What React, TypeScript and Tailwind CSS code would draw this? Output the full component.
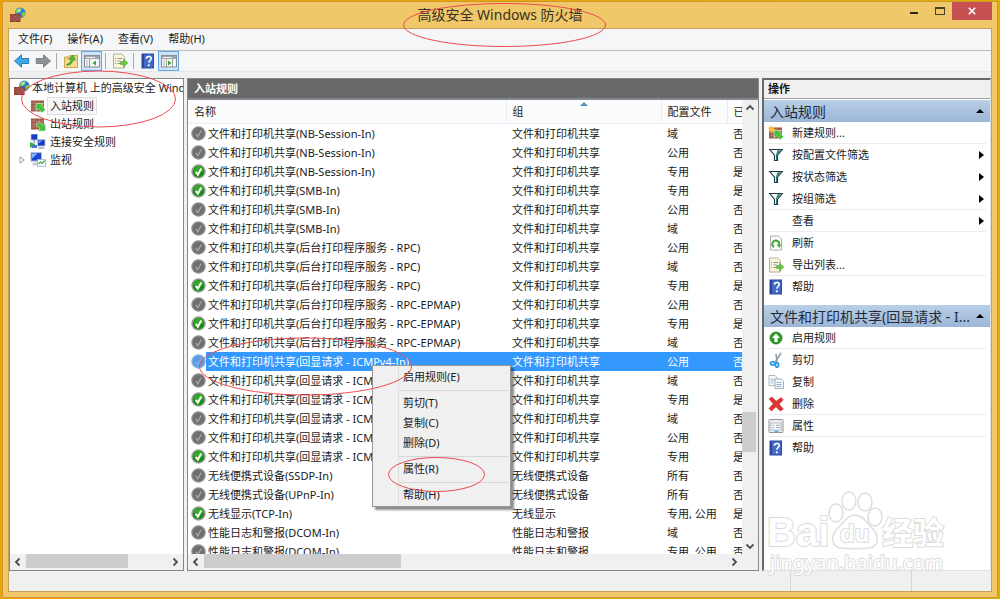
import type { ReactNode } from 'react';
import clsx from 'clsx';

const SHARE = '文件和打印机共享';
const PORTABLE = '无线便携式设备';
const PERF = '性能日志和警报';

interface Rule {
  name: string;
  group: string;
  profile: string;
  enabled: boolean;
  selected?: boolean;
}

const rules: Rule[] = [
  { name: `${SHARE}(NB-Session-In)`, group: SHARE, profile: '域', enabled: false },
  { name: `${SHARE}(NB-Session-In)`, group: SHARE, profile: '公用', enabled: false },
  { name: `${SHARE}(NB-Session-In)`, group: SHARE, profile: '专用', enabled: true },
  { name: `${SHARE}(SMB-In)`, group: SHARE, profile: '专用', enabled: true },
  { name: `${SHARE}(SMB-In)`, group: SHARE, profile: '公用', enabled: false },
  { name: `${SHARE}(SMB-In)`, group: SHARE, profile: '域', enabled: false },
  { name: `${SHARE}(后台打印程序服务 - RPC)`, group: SHARE, profile: '公用', enabled: false },
  { name: `${SHARE}(后台打印程序服务 - RPC)`, group: SHARE, profile: '域', enabled: false },
  { name: `${SHARE}(后台打印程序服务 - RPC)`, group: SHARE, profile: '专用', enabled: true },
  { name: `${SHARE}(后台打印程序服务 - RPC-EPMAP)`, group: SHARE, profile: '公用', enabled: false },
  { name: `${SHARE}(后台打印程序服务 - RPC-EPMAP)`, group: SHARE, profile: '专用', enabled: true },
  { name: `${SHARE}(后台打印程序服务 - RPC-EPMAP)`, group: SHARE, profile: '域', enabled: false },
  { name: `${SHARE}(回显请求 - ICMPv4-In)`, group: SHARE, profile: '公用', enabled: false, selected: true },
  { name: `${SHARE}(回显请求 - ICMPv4-In)`, group: SHARE, profile: '域', enabled: false },
  { name: `${SHARE}(回显请求 - ICMPv4-In)`, group: SHARE, profile: '专用', enabled: true },
  { name: `${SHARE}(回显请求 - ICMPv6-In)`, group: SHARE, profile: '域', enabled: false },
  { name: `${SHARE}(回显请求 - ICMPv6-In)`, group: SHARE, profile: '公用', enabled: false },
  { name: `${SHARE}(回显请求 - ICMPv6-In)`, group: SHARE, profile: '专用', enabled: true },
  { name: `${PORTABLE}(SSDP-In)`, group: PORTABLE, profile: '所有', enabled: false },
  { name: `${PORTABLE}(UPnP-In)`, group: PORTABLE, profile: '所有', enabled: false },
  { name: '无线显示(TCP-In)', group: '无线显示', profile: '专用, 公用', enabled: true },
  { name: `${PERF}(DCOM-In)`, group: PERF, profile: '域', enabled: false },
  { name: `${PERF}(DCOM-In)`, group: PERF, profile: '专用, 公用', enabled: false },
];

/* ---------- icons ---------- */

function Icon({ children }: { children: ReactNode }) {
  return (
    <svg viewBox="0 0 16 16" className="h-4 w-4 shrink-0" aria-hidden="true">
      {children}
    </svg>
  );
}

function Bricks() {
  return (
    <>
      <rect x="1" y="2.500" width="13" height="11" fill="#9c5444" />
      <path
        d="M1 5.200h13M1 8h13M1 10.800h13M4 2.500v2.700M9 2.500v2.700M6.500 5.200V8M12 5.200V8M4 8v2.800M9 8v2.800M6.500 10.800v2.700M12 10.800v2.700"
        stroke="#c79b8d"
        strokeWidth=".6"
        fill="none"
      />
    </>
  );
}

function FirewallIcon() {
  return (
    <Icon>
      <circle cx="10.300" cy="5.800" r="5.200" fill="#2f7fd0" />
      <path d="M7 2.500c2-1.600 4.500-1.500 5-1 .4 1-1.500 2-2 3.500-1 1-3 .5-4 1.500-.4-1.500 0-3 1-4zM12 5.500c1.500-.5 3 0 3.400.7-.1 2-1.400 3.600-2.400 4.200-1-1-1.800-3.500-1-4.900z" fill="#7ccb4b" />
      <circle cx="9" cy="3.500" r="1.600" fill="#d6f0ff" opacity=".7" />
      <rect x="0" y="7" width="10.500" height="8" fill="#8e3b31" />
      <path d="M0 9h10.500M0 11h10.500M0 13h10.500M3 7v2M7 7v2M5 9v2M8.800 9v2M3 11v2M7 11v2M5 13v2" stroke="#c08172" strokeWidth=".5" />
    </Icon>
  );
}

function InboundArrow() {
  return (
    <path d="M6 5.500h7.500l-2 2.200 4 3.800-3.200 3.200-4-3.900L6 13z" fill="#43c13a" stroke="#d8f5cf" strokeWidth=".6" />
  );
}

function InboundIcon() {
  return (
    <Icon>
      <Bricks />
      <InboundArrow />
    </Icon>
  );
}

function OutboundIcon() {
  return (
    <Icon>
      <Bricks />
      <path d="M15.500 15H8l2-2.200L6 9l3.200-3.200 4 3.900 2.300-2.200z" fill="#43c13a" stroke="#d8f5cf" strokeWidth=".6" />
    </Icon>
  );
}

function NewRuleIcon() {
  return (
    <Icon>
      <Bricks />
      <InboundArrow />
      <path d="M3.500 0l.9 2.300L6.800 1.300 5.700 3.500l2.300 1-2.300.9.700 2-2-1L3.500 8.500l-.8-2.200-2.200.8 1-2.200L0 4l1.700-.8L.8 1l2 1z" fill="#ffc43a" />
    </Icon>
  );
}

function SecurityRuleIcon() {
  return (
    <Icon>
      <rect x="1" y="0" width="6.500" height="6" fill="#173cc0" stroke="#b8c4d8" strokeWidth=".8" />
      <path d="M3.500 6h1.500v3h-1.500z" fill="#9aa6b8" />
      <rect x="7.500" y="5.500" width="7.500" height="6.500" fill="#173cc0" stroke="#b8c4d8" strokeWidth=".8" />
      <path d="M8.500 6.500h4l-4 3z" fill="#7ea6ff" />
      <path d="M9 13h5l1 1.800H8z" fill="#a8b4c4" />
      <path d="M0 8l5 2v2l-5 2z" fill="#35b53a" />
      <path d="M2 11h5v3H2z" fill="#4a78c8" />
    </Icon>
  );
}

function MonitorIcon() {
  return (
    <Icon>
      <rect x="1" y=".6" width="10.500" height="8.500" fill="#1b46cf" stroke="#b8bfcc" strokeWidth="1" />
      <path d="M2 1.500h5.500L2 6.500z" fill="#8db4ff" />
      <path d="M3 10.500h7l1.500 3H2z" fill="#c6ced8" />
      <rect x="7.500" y="7.500" width="8" height="7" fill="#f2faff" stroke="#9bb4c8" strokeWidth=".8" />
      <path d="M8.500 12l2-2 1.500 1.500 2.800-3" fill="none" stroke="#3daa3d" strokeWidth="1.100" />
    </Icon>
  );
}

function StatusIcon({ enabled, selected }: { enabled: boolean; selected?: boolean }) {
  const rim = selected ? '#7fb0e6' : enabled ? '#9a9a9a' : '#8b8b8b';
  const face = selected ? '#5f9bdc' : enabled ? '#14900f' : '#6f6f6f';
  return (
    <svg viewBox="0 0 16 16" className="h-[15px] w-[15px] shrink-0" aria-hidden="true">
      <circle cx="8" cy="8" r="7.700" fill={rim} />
      <circle cx="8" cy="8" r="6.200" fill={face} />
      {enabled && <path d="M2.500 8a5.500 5.500 0 0 1 11 0z" fill="#4fc33f" opacity=".5" />}
      <path
        d="M5 8.300l2.300 3.100L11 4.800"
        fill="none"
        stroke={enabled ? '#fff' : selected ? '#86b7ea' : '#a8a8a8'}
        strokeWidth={enabled ? 2.2 : 1.4}
      />
    </svg>
  );
}

function ArrowIcon({ back }: { back?: boolean }) {
  return (
    <Icon>
      {back ? (
        <path d="M.5 8L7.500 1.800v3.700h7.200v5H7.500v3.700z" fill="#3fa9e8" stroke="#1f74b5" strokeWidth=".9" />
      ) : (
        <path d="M15.500 8L8.500 1.800v3.700H1.300v5h7.200v3.700z" fill="#8d9196" stroke="#75797d" strokeWidth=".9" />
      )}
    </Icon>
  );
}

function FolderUpIcon() {
  return (
    <Icon>
      <path d="M1.500 4h4l1-1.500h8v12h-13z" fill="#efcf74" stroke="#c29a3d" strokeWidth=".8" />
      <path d="M2 7h12v7H2z" fill="#f7dd8e" />
      <path d="M3.500 11.500c2.500-.5 4-2.500 4.300-5l-2.300-.6L10 2l2.300 5.300-2.200-.4c-.5 3.200-2.800 5.300-6.300 5.600z" fill="#52b838" stroke="#2c8a1f" strokeWidth=".5" />
    </Icon>
  );
}

function PaneIcon({ right }: { right?: boolean }) {
  return (
    <Icon>
      <rect x=".5" y="2.500" width="15" height="11.500" fill="#f4f4f4" stroke="#8a8f96" />
      <path d="M1 3h14v3H1z" fill="#9ea5ad" />
      <path d="M2 4.500h9" stroke="#fff" strokeWidth=".8" />
      <path d={right ? 'M5.500 6v8M11.500 6v8' : 'M5.500 6v8'} stroke="#8a8f96" strokeWidth=".8" />
      {right ? (
        <path d="M7 7.500l3.500 2.500L7 12.500z" fill="#37a52d" />
      ) : (
        <path d="M12 7.500L8.500 10l3.500 2.500z" fill="#37a52d" />
      )}
      <path d="M2 8h2M2 10h2M2 12h2" stroke="#9ea5ad" strokeWidth=".8" />
    </Icon>
  );
}

function ExportIcon() {
  return (
    <Icon>
      <path d="M1.500 1h8l3 2.800V15h-11z" fill="#fbf6dc" stroke="#aaa68f" strokeWidth=".9" />
      <path d="M3 5.500h1M3 8h1M3 10.500h1M5.500 5.500h5M5.500 8h3M5.500 10.500h3" stroke="#8585a0" strokeWidth=".9" />
      <path d="M8.500 8.500h3V6l4.300 4-4.300 4v-2.500h-3z" fill="#6cc644" stroke="#3f9a28" strokeWidth=".5" />
    </Icon>
  );
}

function HelpIcon() {
  return (
    <Icon>
      <rect x="2" y="1" width="11.500" height="14" fill="#4468c8" stroke="#2c4a9e" />
      <path d="M2 1h2v14H2z" fill="#2a4796" />
      <path d="M6.400 5.700c0-3 4.800-3 4.800-.2 0 1.900-2.300 2-2.300 4.200" fill="none" stroke="#fff" strokeWidth="1.600" />
      <circle cx="8.800" cy="12.300" r="1.100" fill="#fff" />
    </Icon>
  );
}

function FilterIcon() {
  return (
    <Icon>
      <path d="M1.700 2.500h12.600L9.500 8.200v5.300h-3V8.200z" fill="#f4f9f9" stroke="#26383a" strokeWidth="1.100" />
      <path d="M9.500 3.200h3.200L9 7.700v5.300H8V8z" fill="#1f8080" />
    </Icon>
  );
}

function RefreshIcon() {
  return (
    <Icon>
      <path d="M2.500 1h8l3 3v11h-11z" fill="#fbfbfb" stroke="#a5a5a5" strokeWidth=".9" />
      <path d="M6 12.100a3.500 3.500 0 1 1 5.300-2.600" fill="none" stroke="#41a838" strokeWidth="1.900" />
      <path d="M13 9l-1.200 4L8.400 9.800z" fill="#41a838" />
    </Icon>
  );
}

function EnableIcon() {
  return (
    <Icon>
      <circle cx="8" cy="8" r="6" fill="#2f9c27" stroke="#1d701a" strokeWidth=".8" />
      <path d="M8 3.500L12 8H9.600v4H6.400V8H4z" fill="#fff" />
    </Icon>
  );
}

function CutIcon() {
  return (
    <Icon>
      <path d="M13 1L7.300 10M8 2l1 8.500" stroke="#8799a8" strokeWidth="1.500" fill="none" />
      <ellipse cx="4.800" cy="11.500" rx="2.300" ry="1.600" fill="none" stroke="#2a95d8" strokeWidth="1.700" />
      <ellipse cx="9" cy="13" rx="1.600" ry="2.200" fill="none" stroke="#2a95d8" strokeWidth="1.700" />
    </Icon>
  );
}

function CopyIcon() {
  return (
    <Icon>
      <path d="M1 1.500h6l2 2v8H1z" fill="#fbfcfe" stroke="#9aa3ad" strokeWidth=".8" />
      <path d="M2.500 5h4M2.500 7h4M2.500 9h3" stroke="#8aa8cc" strokeWidth=".8" />
      <path d="M7 5h6l2.500 2.300V14.500H7z" fill="#fbfcfe" stroke="#8d97a2" strokeWidth=".8" />
      <path d="M8.500 8.500h5M8.500 10.500h5M8.500 12.500h5" stroke="#6d9ad0" strokeWidth=".8" />
    </Icon>
  );
}

function DeleteIcon() {
  return (
    <Icon>
      <path d="M1 3l3-2 4.200 4.300L13 1.500 15.300 4l-4.300 4 4.300 5-3 2L8 10.700 3.500 15 1 12.500l4.300-4.700z" fill="#e03535" stroke="#b01818" strokeWidth=".5" />
    </Icon>
  );
}

function PropertiesIcon() {
  return (
    <Icon>
      <rect x="1" y="1.500" width="14" height="13" rx="1" fill="#ededed" stroke="#8f959b" />
      <rect x="3" y="5" width="10" height="7" fill="#fff" stroke="#a3adb8" strokeWidth=".8" />
      <path d="M4.500 7.300h2M4.500 9.500h2M8 7.300h4M8 9.500h4" stroke="#7c96b3" strokeWidth=".9" />
      <path d="M6.500 13.300h4" stroke="#35b4e8" strokeWidth="1.200" />
    </Icon>
  );
}

/* ---------- scrollbars ---------- */

const chevrons = {
  left: 'M6.500 1.500L3 5l3.500 3.500',
  right: 'M3.500 1.500L7 5 3.500 8.500',
  up: 'M1.500 6.500L5 3l3.500 3.500',
  down: 'M1.500 3.500L5 7l3.500-3.500',
};

function ScrollButton({ dir, label }: { dir: keyof typeof chevrons; label: string }) {
  return (
    <button aria-label={label} className="flex h-4 w-4 shrink-0 items-center justify-center">
      <svg viewBox="0 0 10 10" className="h-2.5 w-2.5">
        <path d={chevrons[dir]} fill="none" stroke="#505050" strokeWidth="1.800" />
      </svg>
    </button>
  );
}

/* ---------- left tree ---------- */

function TreePane() {
  return (
    <aside className="flex w-[175px] shrink-0 flex-col border border-[#828790] bg-white">
      <ul className="min-h-0 flex-1 overflow-hidden leading-[18px] whitespace-nowrap">
        <li className="flex h-[18px] items-center gap-0.5 pl-1">
          <FirewallIcon />
          本地计算机 上的高级安全 Windows 防火墙
        </li>
        <li className="flex h-[18px] items-center gap-px pl-5">
          <InboundIcon />
          <span className="h-[18px] border border-[#dedede] bg-[#f7f7f7] px-0.5 leading-4">入站规则</span>
        </li>
        <li className="flex h-[18px] items-center gap-1 pl-5">
          <OutboundIcon />
          出站规则
        </li>
        <li className="flex h-[18px] items-center gap-1 pl-5">
          <SecurityRuleIcon />
          连接安全规则
        </li>
        <li className="flex h-[18px] items-center gap-1 pl-2">
          <svg viewBox="0 0 8 8" className="h-2 w-2" aria-hidden="true">
            <path d="M2 .8L6.200 4 2 7.200z" fill="#fff" stroke="#a0a0a0" />
          </svg>
          <MonitorIcon />
          监视
        </li>
      </ul>
      <div className="flex h-4 bg-[#f0f0f0]">
        <ScrollButton dir="left" label="向左滚动" />
        <div className="flex-1">
          <div className="h-3.5 w-[102px] bg-[#cdcdcd]" />
        </div>
        <ScrollButton dir="right" label="向右滚动" />
      </div>
    </aside>
  );
}

/* ---------- rule list ---------- */

function RuleTable() {
  return (
    <table className="w-full table-fixed border-collapse text-left leading-[19px] whitespace-nowrap">
      <colgroup>
        <col />
        <col className="w-[155px]" />
        <col className="w-[66px]" />
        <col className="w-[15px]" />
      </colgroup>
      <thead>
        <tr className="h-[23px] border-b border-[#e4eefb] bg-[#fcfcfc]">
          <th className="border-r border-[#e4eefb] pl-1.5 font-normal">名称</th>
          <th className="relative border-r border-[#e4eefb] pl-1.5 font-normal">
            组
            <svg viewBox="0 0 8 4" className="absolute top-0.5 left-1/2 h-1 w-2 -translate-x-1/2" aria-hidden="true">
              <path d="M0 4l4-4 4 4z" fill="#4f93b8" />
            </svg>
          </th>
          <th className="border-r border-[#e4eefb] pl-1.5 font-normal">配置文件</th>
          <th className="overflow-hidden pl-1.5 font-normal">已启用</th>
        </tr>
      </thead>
      <tbody>
        {rules.map((rule, index) => (
          <tr key={index} className={clsx('h-[19px]', rule.selected && 'text-white')}>
            <td className="overflow-hidden p-0">
              <div className="flex h-[19px] items-center pl-[3px]">
                <StatusIcon enabled={rule.enabled} selected={rule.selected} />
                <span className={clsx('flex-1 pl-0.5', rule.selected && 'bg-[#3399ff]')}>{rule.name}</span>
              </div>
            </td>
            <td className={clsx('overflow-hidden py-0 pr-0 pl-1.5', rule.selected && 'bg-[#3399ff]')}>{rule.group}</td>
            <td className={clsx('py-0 pr-0 pl-1.5', rule.selected && 'bg-[#3399ff]')}>{rule.profile}</td>
            <td className={clsx('overflow-hidden py-0 pr-0 pl-1.5', rule.selected && 'bg-[#3399ff]')}>
              {rule.enabled ? '是' : '否'}
            </td>
          </tr>
        ))}
      </tbody>
    </table>
  );
}

function RulesPane() {
  return (
    <main className="flex min-w-0 flex-1 flex-col">
      <h2 className="h-[21px] shrink-0 border border-[#828790] bg-[#696969] px-1.5 leading-[19px] font-bold text-white">
        入站规则
      </h2>
      <div className="flex min-h-0 flex-1 flex-col border border-[#828790] bg-white">
        <div className="flex min-h-0 flex-1">
          <div className="min-w-0 flex-1 overflow-hidden">
            <RuleTable />
          </div>
          <div className="flex w-4 flex-col bg-[#f0f0f0]">
            <ScrollButton dir="up" label="向上滚动" />
            <div className="flex flex-1 flex-col pr-0.5">
              <div className="grow-[76]" />
              <div className="h-10 bg-[#cdcdcd]" />
              <div className="grow-[22]" />
            </div>
            <ScrollButton dir="down" label="向下滚动" />
          </div>
        </div>
        <div className="flex h-4 bg-[#f0f0f0] pr-4">
          <ScrollButton dir="left" label="向左滚动" />
          <div className="flex-1">
            <div className="h-3.5 w-[197px] bg-[#cdcdcd]" />
          </div>
          <ScrollButton dir="right" label="向右滚动" />
        </div>
      </div>
    </main>
  );
}

/* ---------- actions ---------- */

function SectionHeader({ children }: { children: ReactNode }) {
  return (
    <button className="flex h-[22px] w-full items-center justify-between bg-linear-to-b from-[#b9cfe8] to-[#9cb6d6] pr-1.5 pl-1.5 text-left text-[14px] text-[#1e2a3a]">
      <span className="truncate">{children}</span>
      <svg viewBox="0 0 8 4" className="h-1 w-2 shrink-0" aria-hidden="true">
        <path d="M0 4l4-4 4 4z" fill="#000" />
      </svg>
    </button>
  );
}

function Action({ icon, label, more }: { icon?: ReactNode; label: string; more?: boolean }) {
  return (
    <button className="flex h-[22px] w-full items-center gap-2 pr-1.5 pl-1 text-left">
      <span className="h-4 w-4">{icon}</span>
      <span className="flex-1">{label}</span>
      {more && (
        <svg viewBox="0 0 5 8" className="h-2 w-[5px]" aria-hidden="true">
          <path d="M0 0l5 4-5 4z" fill="#000" />
        </svg>
      )}
    </button>
  );
}

function Divider() {
  return <div className="mx-1 -mt-px h-px bg-[#ececec]" />;
}

function ActionsPane() {
  return (
    <aside className="w-[229px] shrink-0 border-t-2 border-r border-b border-l-2 border-[#696969] border-r-[#e3e3e3] border-b-[#e3e3e3] bg-white">
      <h2 className="h-[19px] border-b border-[#a0a0a0] bg-[#f0f0f0] pl-1 leading-[18px] font-bold">操作</h2>
      <div className="pt-px">
        <SectionHeader>入站规则</SectionHeader>
        <Action icon={<NewRuleIcon />} label="新建规则..." />
        <Divider />
        <Action icon={<FilterIcon />} label="按配置文件筛选" more />
        <Action icon={<FilterIcon />} label="按状态筛选" more />
        <Action icon={<FilterIcon />} label="按组筛选" more />
        <Divider />
        <Action label="查看" more />
        <Divider />
        <Action icon={<RefreshIcon />} label="刷新" />
        <Action icon={<ExportIcon />} label="导出列表..." />
        <Divider />
        <Action icon={<HelpIcon />} label="帮助" />
      </div>
      <div className="pt-[7px]">
        <SectionHeader>文件和打印机共享(回显请求 - I...</SectionHeader>
        <Action icon={<EnableIcon />} label="启用规则" />
        <Divider />
        <Action icon={<CutIcon />} label="剪切" />
        <Action icon={<CopyIcon />} label="复制" />
        <Action icon={<DeleteIcon />} label="删除" />
        <Divider />
        <Action icon={<PropertiesIcon />} label="属性" />
        <Divider />
        <Action icon={<HelpIcon />} label="帮助" />
      </div>
    </aside>
  );
}

/* ---------- context menu ---------- */

const menuGroups = [['启用规则(E)'], ['剪切(T)', '复制(C)', '删除(D)'], ['属性(R)'], ['帮助(H)']];

function ContextMenu() {
  return (
    <div className="absolute top-[365px] left-[372px] w-[139px] border border-[#979797] bg-[#f0f0f0] p-px shadow-[3px_3px_2px_rgba(0,0,0,0.45)]">
      <div className="ml-6 border-l border-[#e0e0e0]">
        {menuGroups.map((group, index) => (
          <div key={index}>
            {index > 0 && (
              <div className="h-1.5 pt-[3px]">
                <div className="h-px bg-[#d7d7d7]" />
              </div>
            )}
            {group.map((item) => (
              <button key={item} className="block h-5 w-full pl-1 text-left leading-5">
                {item}
              </button>
            ))}
          </div>
        ))}
      </div>
    </div>
  );
}

/* ---------- chrome ---------- */

function TitleBar() {
  return (
    <header className="grid h-[26px] shrink-0 grid-cols-[1fr_auto_1fr]">
      <div className="flex items-center pl-0.5">
        <FirewallIcon />
      </div>
      <h1 className="text-[14px] leading-[26px] text-[#3a3222]">高级安全 Windows 防火墙</h1>
      <div className="flex items-start justify-end">
        <button aria-label="最小化" className="flex h-[18px] w-7 items-center justify-center">
          <span className="mt-1 h-0.5 w-2 bg-[#2b2518]" />
        </button>
        <button aria-label="最大化" className="flex h-[18px] w-6 items-center justify-center">
          <span className="h-2 w-2.5 border border-t-2 border-[#4a3f28]" />
        </button>
        <button aria-label="关闭" className="flex h-[18px] w-10 items-center justify-center bg-[#c75050]">
          <svg viewBox="0 0 8 8" className="h-2 w-2">
            <path d="M.8.8l6.400 6.400M7.200.8L.8 7.200" stroke="#fff" strokeWidth="1.600" />
          </svg>
        </button>
      </div>
    </header>
  );
}

function ToolButton({ label, active, children }: { label: string; active?: boolean; children: ReactNode }) {
  return (
    <button
      aria-label={label}
      className={clsx('flex h-5 w-[21px] items-center justify-center', active && 'border border-[#66a7e8] bg-[#cbe4fb]')}
    >
      {children}
    </button>
  );
}

function ToolSeparator() {
  return <div className="mx-[3px] h-4 w-px bg-[#a9a9a9]" />;
}

function Watermark() {
  return (
    <svg viewBox="0 0 190 94" className="pointer-events-none absolute right-[45px] bottom-[21px] h-[94px] w-[190px]" aria-hidden="true">
      <g fill="#fff" stroke="#dedede" strokeWidth="1.500">
        <ellipse cx="71" cy="29" rx="7" ry="9" />
        <ellipse cx="84" cy="17" rx="7" ry="9" />
        <ellipse cx="100" cy="18" rx="7" ry="9" />
        <ellipse cx="110" cy="33" rx="7" ry="9" />
        <path d="M90 31c8 0 12 8 17 13 8 8 7 19-3 20-8 1-19 1-28 0-10-1-11-12-3-20 5-5 9-13 17-13z" />
      </g>
      <g fill="#fff" stroke="#dcdcdc" strokeWidth="2" strokeLinejoin="round" style={{ paintOrder: 'stroke' }}>
        <text x="2" y="62" fontSize="40" fontWeight="700" fontFamily="Liberation Sans, sans-serif">Bai</text>
        <text x="75" y="58" fontSize="24" fontWeight="700" fontFamily="Liberation Sans, sans-serif">du</text>
        <text x="117" y="60" fontSize="31" fontWeight="700" fontFamily="Noto Sans CJK SC, sans-serif">经验</text>
        <text x="5" y="86" fontSize="20" fontFamily="Noto Sans, sans-serif">jingyan.baidu.com</text>
      </g>
    </svg>
  );
}

// red pen circles around the steps to follow
function Annotations() {
  return (
    <svg className="pointer-events-none absolute top-0 left-0 h-[599px] w-[1000px]" fill="none" stroke="#ee4a50" aria-hidden="true">
      <ellipse cx="504.500" cy="25" rx="101" ry="21.500" />
      <ellipse cx="98.500" cy="99" rx="77" ry="28" />
      <ellipse cx="305.500" cy="366.500" rx="106" ry="28.500" />
      <ellipse cx="436.500" cy="474.500" rx="48" ry="17" />
    </svg>
  );
}

export default function App() {
  return (
    <div className="relative flex h-screen flex-col overflow-hidden bg-linear-to-r from-[#f0a000] to-[#e2ae00] px-0.5 py-px font-['Noto_Sans','Noto_Sans_CJK_SC',sans-serif] text-[11px] text-[#1a1a1a]">
      <div className="flex min-h-0 flex-1 flex-col border border-[#c8983a] bg-[#f0c869] px-[5px] pb-[5px]">
        <TitleBar />
        <div className="flex min-h-0 flex-1 flex-col border border-t-0 border-[#c9a154] bg-[#f0f0f0]">
          <nav className="flex h-[23px] shrink-0 items-center gap-[15px] border-t border-b border-t-[#c9a154] border-b-[#bcbcbc] bg-[#f5f6f7] pl-[9px]">
            <button>文件(F)</button>
            <button>操作(A)</button>
            <button>查看(V)</button>
            <button>帮助(H)</button>
          </nav>
          <div className="flex h-[21px] shrink-0 items-center border-b border-[#e6e6e6] bg-[#f5f6f7] pl-0.5">
            <ToolButton label="后退"><ArrowIcon back /></ToolButton>
            <ToolButton label="前进"><ArrowIcon /></ToolButton>
            <ToolSeparator />
            <ToolButton label="上一级"><FolderUpIcon /></ToolButton>
            <ToolButton label="显示控制台树" active><PaneIcon /></ToolButton>
            <ToolSeparator />
            <ToolButton label="导出列表"><ExportIcon /></ToolButton>
            <ToolSeparator />
            <ToolButton label="帮助"><HelpIcon /></ToolButton>
            <ToolButton label="显示操作窗格" active><PaneIcon right /></ToolButton>
          </div>
          <div className="flex min-h-0 flex-1 gap-[3px] pt-1.5">
            <TreePane />
            <RulesPane />
            <ActionsPane />
          </div>
          <footer className="flex h-5 shrink-0 justify-end">
            <div className="w-[121px] border-l border-[#d7d7d7]" />
            <div className="w-[80px] border-l border-[#d7d7d7]" />
          </footer>
        </div>
      </div>
      <ContextMenu />
      <Watermark />
      <Annotations />
    </div>
  );
}
